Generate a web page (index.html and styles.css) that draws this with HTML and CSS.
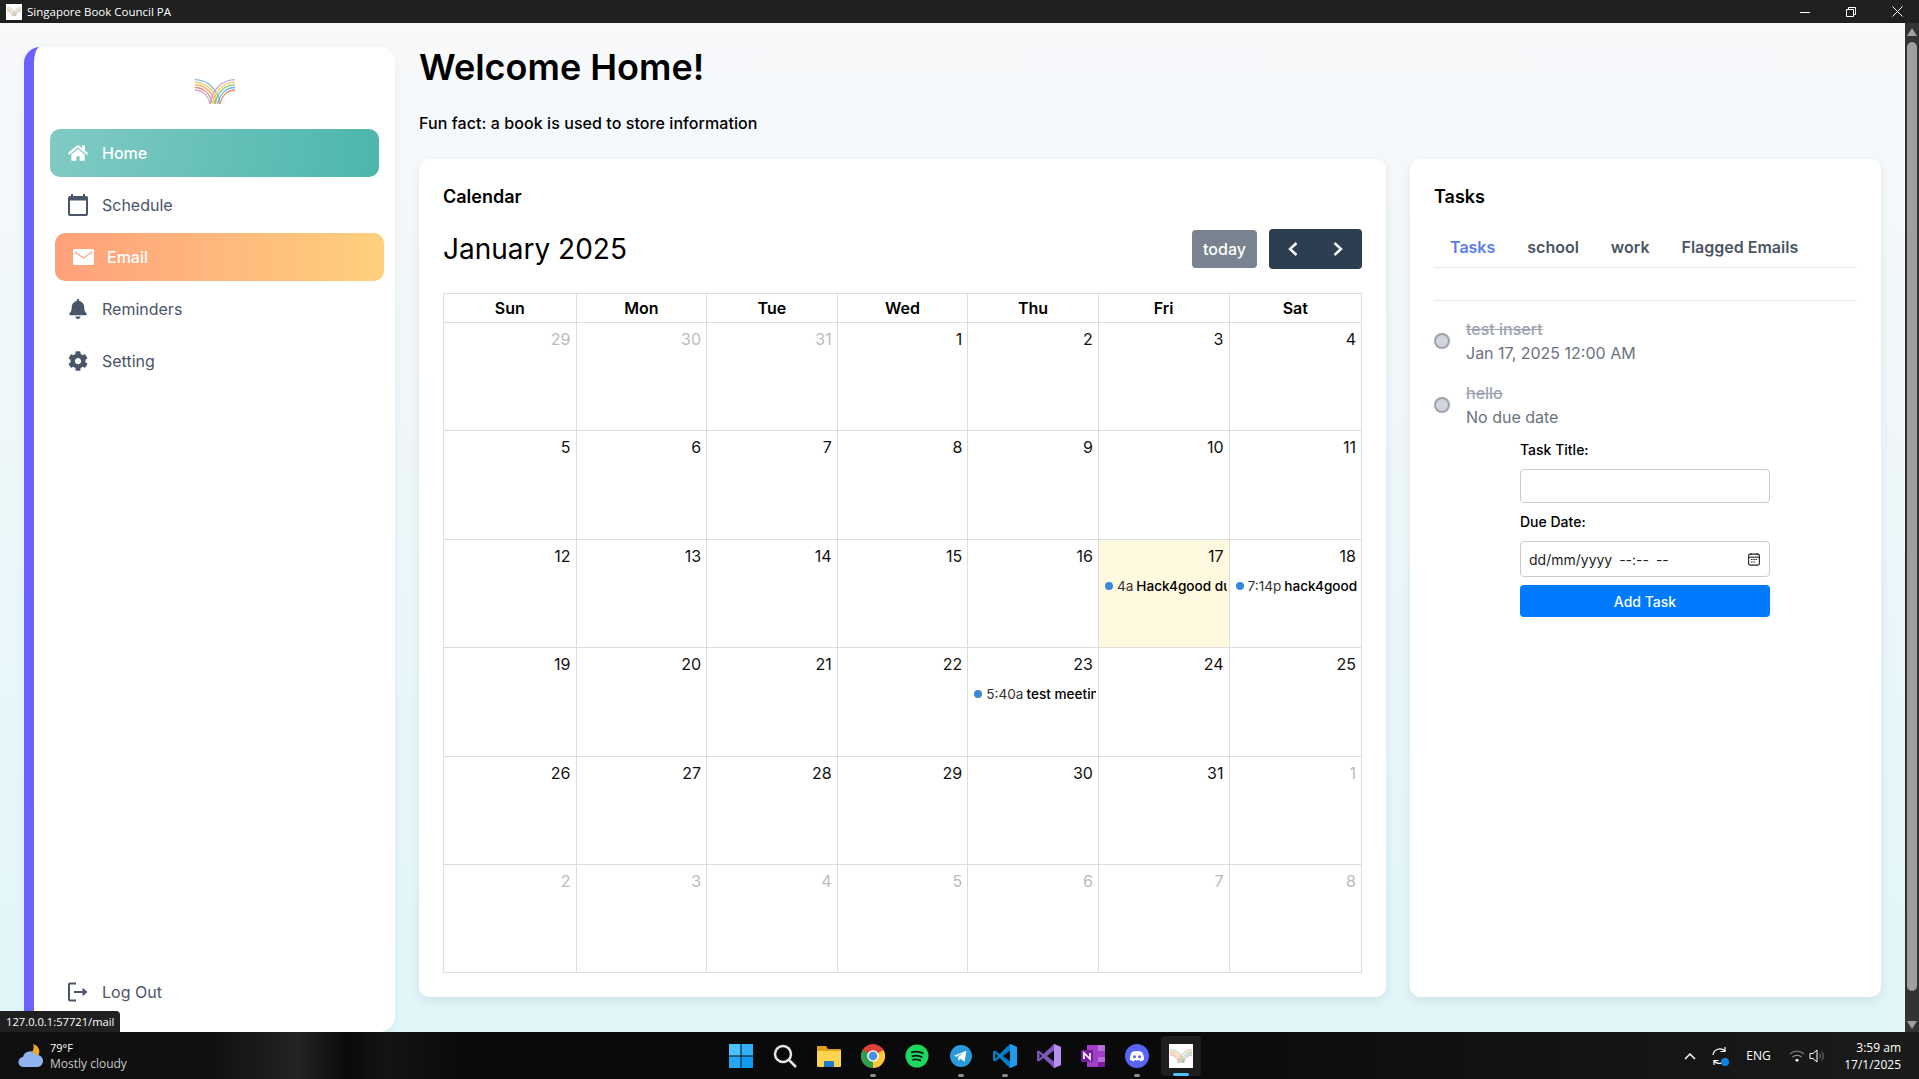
FILE: index.html
```html
<!DOCTYPE html>
<html>
  <head>
    <title>Singapore Book Council PA</title>
    <link rel="stylesheet" href="styles.css">
  </head>
  <body>
    <svg class="defs" width="0" height="0">
      <symbol id="logo" viewBox="0 0 40 25">
        <g fill="none" stroke-width="1.300">
          <path d="M0 .7C12 .7 23 10 25 25" stroke="#7fb5e0"/>
          <path d="M0 3.300C11 3.300 20 11 22.500 25" stroke="#f4c95d"/>
          <path d="M0 5.900C10 5.900 18 13 20 25" stroke="#f6a85f"/>
          <path d="M0 8.500C8 8.500 15 14 17.500 25" stroke="#ef8a7a"/>
          <path d="M0 11C7 11 13 16 15 25" stroke="#c9a6d8"/>
          <path d="M40 .7C28 .7 17 10 15 25" stroke="#c9a6d8"/>
          <path d="M40 3.300C29 3.300 20 11 17.500 25" stroke="#f4c95d"/>
          <path d="M40 5.900C30 5.900 22 13 20 25" stroke="#7ccb84"/>
          <path d="M40 8.500C32 8.500 25 14 22.500 25" stroke="#6fb0e8"/>
          <path d="M40 11C33 11 27 16 25 25" stroke="#f2855a"/>
        </g>
      </symbol>
    </svg>

    <header class="titlebar">
      <div class="titlebar-left">
        <span class="app-icon">
          <svg width="14" height="9"><use href="#logo"/></svg>
        </span>
        <span>Singapore Book Council PA</span>
      </div>
      <div class="window-controls">
        <svg width="10" height="10" viewBox="0 0 10 10"><path d="M0 5.500h10" stroke="#fff"/></svg>
        <svg width="10" height="10" viewBox="0 0 10 10"><path d="M.5 2.500h7v7h-7zM2.500 2.500v-2h7v7h-2" fill="none" stroke="#fff"/></svg>
        <svg width="11" height="11" viewBox="0 0 11 11"><path d="M.5.5l10 10M10.500.5l-10 10" stroke="#fff"/></svg>
      </div>
    </header>

    <div class="viewport">
      <aside class="sidebar">
        <div class="logo">
          <svg width="40" height="25"><use href="#logo"/></svg>
        </div>
        <nav class="nav">
          <a class="nav-item nav-home">
            <svg class="nav-icon" viewBox="0 0 576 512"><path fill="currentColor" d="M280.37 148.26L96 300.11V464a16 16 0 0 0 16 16l112.06-.29a16 16 0 0 0 15.92-16V368a16 16 0 0 1 16-16h64a16 16 0 0 1 16 16v95.64a16 16 0 0 0 16 16.05L464 480a16 16 0 0 0 16-16V300L295.67 148.26a12.19 12.19 0 0 0-15.3 0zM571.6 251.47L488 182.56V44.05a12 12 0 0 0-12-12h-56a12 12 0 0 0-12 12v72.61L318.47 43a48 48 0 0 0-61 0L4.34 251.47a12 12 0 0 0-1.6 16.9l25.5 31A12 12 0 0 0 45.15 301l235.22-193.74a12.19 12.19 0 0 1 15.3 0L530.9 301a12 12 0 0 0 16.9-1.6l25.5-31a12 12 0 0 0-1.7-16.93z"/></svg>
            <span>Home</span>
          </a>
          <a class="nav-item">
            <svg class="nav-icon nav-icon-tall" viewBox="0 0 20 22"><path fill="currentColor" d="M3 0h2v2h10V0h2v2h1a2 2 0 0 1 2 2v16a2 2 0 0 1-2 2H2a2 2 0 0 1-2-2V4a2 2 0 0 1 2-2h1zM2 6.500V20h16V6.500z"/></svg>
            <span>Schedule</span>
          </a>
          <a class="nav-item nav-email">
            <svg class="nav-icon nav-icon-wide" viewBox="0 0 21 16"><rect width="21" height="16" rx="1.500" fill="#fff"/><path d="M2 3l8.500 6L19 3" fill="none" stroke="#ffa585" stroke-width="1.200"/></svg>
            <span>Email</span>
          </a>
          <a class="nav-item">
            <svg class="nav-icon" viewBox="0 0 448 512"><path fill="currentColor" d="M224 512c35.32 0 63.97-28.65 63.97-64H160.03c0 35.35 28.65 64 63.97 64zm215.39-149.71c-19.32-20.76-55.47-51.99-55.47-154.29 0-77.7-54.48-139.9-127.94-155.16V32c0-17.67-14.32-32-31.98-32s-31.98 14.33-31.98 32v20.84C118.56 68.1 64.08 130.3 64.08 208c0 102.3-36.15 133.53-55.47 154.29-6 6.45-8.66 14.16-8.61 21.71.11 16.4 12.98 32 32.1 32h383.8c19.12 0 32-15.6 32.1-32 .05-7.55-2.61-15.27-8.61-21.71z"/></svg>
            <span>Reminders</span>
          </a>
          <a class="nav-item">
            <svg class="nav-icon" viewBox="0 0 512 512"><path fill="currentColor" d="M487.4 315.7l-42.6-24.6c4.3-23.2 4.3-47 0-70.2l42.6-24.6c4.9-2.8 7.1-8.6 5.5-14-11.1-35.6-30-67.8-54.7-94.6-3.8-4.1-10-5.1-14.8-2.3L380.8 110c-17.9-15.4-38.5-27.3-60.8-35.1V25.8c0-5.6-3.9-10.5-9.4-11.7-36.7-8.2-74.3-7.8-109.2 0-5.5 1.2-9.4 6.1-9.4 11.7V75c-22.2 7.9-42.8 19.8-60.8 35.1L88.7 85.5c-4.9-2.8-11-1.9-14.8 2.3-24.7 26.7-43.6 58.9-54.7 94.6-1.7 5.4.6 11.2 5.5 14L67.3 221c-4.3 23.2-4.3 47 0 70.2l-42.6 24.6c-4.9 2.8-7.1 8.6-5.5 14 11.1 35.6 30 67.8 54.7 94.6 3.8 4.1 10 5.1 14.8 2.3l42.6-24.6c17.9 15.4 38.5 27.3 60.8 35.1v49.2c0 5.6 3.9 10.5 9.4 11.7 36.7 8.2 74.3 7.8 109.2 0 5.5-1.2 9.4-6.1 9.4-11.7v-49.2c22.2-7.9 42.8-19.8 60.8-35.1l42.6 24.6c4.9 2.8 11 1.9 14.8-2.3 24.7-26.7 43.6-58.9 54.7-94.6 1.5-5.5-.7-11.3-5.6-14.1zM256 336c-44.1 0-80-35.9-80-80s35.9-80 80-80 80 35.9 80 80-35.9 80-80 80z"/></svg>
            <span>Setting</span>
          </a>
        </nav>
        <a class="nav-item nav-logout">
          <svg class="nav-icon" viewBox="0 0 20 20"><path d="M8 1.500H2a1 1 0 0 0-1 1v15a1 1 0 0 0 1 1h6M6 10h12M14.500 7l3.500 3-3.500 3" fill="none" stroke="currentColor" stroke-width="2"/></svg>
          <span>Log Out</span>
        </a>
      </aside>

      <main class="main">
        <h1 class="welcome">Welcome Home!</h1>
        <p class="fun-fact">Fun fact: a book is used to store information</p>

        <div class="cards">
          <section class="card calendar-card">
            <h2 class="card-title">Calendar</h2>
            <div class="calendar-toolbar">
              <div class="month-title">January 2025</div>
              <div class="toolbar-buttons">
                <button class="today-btn">today</button>
                <div class="arrows">
                  <svg width="12" height="16" viewBox="0 0 12 16"><path d="M9.500 2L3 8l6.500 6" fill="none" stroke="#fff" stroke-width="2.400"/></svg>
                  <svg width="12" height="16" viewBox="0 0 12 16"><path d="M2.500 2L9 8l-6.500 6" fill="none" stroke="#fff" stroke-width="2.400"/></svg>
                </div>
              </div>
            </div>

            <table class="month">
              <thead>
                <tr><th class="edge-col">Sun</th><th>Mon</th><th>Tue</th><th>Wed</th><th>Thu</th><th>Fri</th><th class="edge-col">Sat</th></tr>
              </thead>
              <tbody>
                <tr>
                  <td class="other"><div class="day">29</div></td>
                  <td class="other"><div class="day">30</div></td>
                  <td class="other"><div class="day">31</div></td>
                  <td><div class="day">1</div></td>
                  <td><div class="day">2</div></td>
                  <td><div class="day">3</div></td>
                  <td><div class="day">4</div></td>
                </tr>
                <tr>
                  <td><div class="day">5</div></td>
                  <td><div class="day">6</div></td>
                  <td><div class="day">7</div></td>
                  <td><div class="day">8</div></td>
                  <td><div class="day">9</div></td>
                  <td><div class="day">10</div></td>
                  <td><div class="day">11</div></td>
                </tr>
                <tr>
                  <td><div class="day">12</div></td>
                  <td><div class="day">13</div></td>
                  <td><div class="day">14</div></td>
                  <td><div class="day">15</div></td>
                  <td><div class="day">16</div></td>
                  <td class="today">
                    <div class="day">17</div>
                    <div class="event"><span class="dot"></span><span class="time">4a</span><b>Hack4good du</b></div>
                  </td>
                  <td>
                    <div class="day">18</div>
                    <div class="event"><span class="dot"></span><span class="time">7:14p</span><b>hack4good</b></div>
                  </td>
                </tr>
                <tr>
                  <td><div class="day">19</div></td>
                  <td><div class="day">20</div></td>
                  <td><div class="day">21</div></td>
                  <td><div class="day">22</div></td>
                  <td>
                    <div class="day">23</div>
                    <div class="event"><span class="dot"></span><span class="time">5:40a</span><b>test meeting</b></div>
                  </td>
                  <td><div class="day">24</div></td>
                  <td><div class="day">25</div></td>
                </tr>
                <tr>
                  <td><div class="day">26</div></td>
                  <td><div class="day">27</div></td>
                  <td><div class="day">28</div></td>
                  <td><div class="day">29</div></td>
                  <td><div class="day">30</div></td>
                  <td><div class="day">31</div></td>
                  <td class="other"><div class="day">1</div></td>
                </tr>
                <tr>
                  <td class="other"><div class="day">2</div></td>
                  <td class="other"><div class="day">3</div></td>
                  <td class="other"><div class="day">4</div></td>
                  <td class="other"><div class="day">5</div></td>
                  <td class="other"><div class="day">6</div></td>
                  <td class="other"><div class="day">7</div></td>
                  <td class="other"><div class="day">8</div></td>
                </tr>
              </tbody>
            </table>
          </section>

          <section class="card tasks-card">
            <h2 class="card-title">Tasks</h2>
            <div class="tabs">
              <a class="tab tab-active">Tasks</a>
              <a class="tab">school</a>
              <a class="tab">work</a>
              <a class="tab">Flagged Emails</a>
            </div>
            <div class="tasks-rule"></div>

            <div class="task">
              <span class="task-check"></span>
              <div>
                <div class="task-title">test insert</div>
                <div class="task-due">Jan 17, 2025 12:00 AM</div>
              </div>
            </div>
            <div class="task">
              <span class="task-check"></span>
              <div>
                <div class="task-title">hello</div>
                <div class="task-due">No due date</div>
              </div>
            </div>

            <form class="task-form">
              <label for="taskTitle">Task Title:</label>
              <input id="taskTitle" class="field" type="text">
              <label>Due Date:</label>
              <div class="field date-field">
                <span>dd/mm/yyyy --:-- --</span>
                <svg width="12" height="13" viewBox="0 0 12 13"><rect x=".6" y="1.100" width="10.800" height="11" rx="1.500" fill="none" stroke="#222" stroke-width="1.100"/><path d="M1 4.200h10" stroke="#222" stroke-width="1.100"/><path d="M3 .2v2M9 .2v2M3 6.500h1.500M5.300 6.500h1.500M7.600 6.500h1.500M3 9h1.500M5.300 9h1.500" stroke="#222"/></svg>
              </div>
              <button class="add-btn" type="button">Add Task</button>
            </form>
          </section>
        </div>
      </main>

      <div class="scrollbar">
        <svg width="10" height="8" viewBox="0 0 10 8"><path d="M5 0l5 8H0z" fill="#9f9f9f"/></svg>
        <div class="scroll-thumb"></div>
        <svg width="10" height="8" viewBox="0 0 10 8"><path d="M5 8L0 0h10z" fill="#9f9f9f"/></svg>
      </div>

      <div class="status-tip">127.0.0.1:57721/mail</div>
    </div>

    <footer class="taskbar">
      <div class="weather">
        <svg width="26" height="26" viewBox="0 0 26 26">
          <path d="M15 1a8 8 0 1 1-9 11A8 8 0 0 0 15 1z" fill="#f5a623"/>
          <path d="M6 24a5 5 0 0 1-1-10 7 7 0 0 1 13-2 6 6 0 0 1 2 12z" fill="#8fb4ee"/>
        </svg>
        <div>
          <div class="weather-temp">79°F</div>
          <div class="weather-text">Mostly cloudy</div>
        </div>
      </div>

      <div class="task-icons">
        <span class="tb-icon">
          <svg width="24" height="24" viewBox="0 0 24 24"><path fill="#4cc2ff" d="M0 0h11.500v11.500H0z"/><path fill="#2fb0f8" d="M12.500 0H24v11.500H12.500z"/><path fill="#23a6f5" d="M0 12.500h11.500V24H0z"/><path fill="#0f9bf0" d="M12.500 12.500H24V24H12.500z"/></svg>
        </span>
        <span class="tb-icon">
          <svg width="24" height="24" viewBox="0 0 24 24"><circle cx="10" cy="10" r="8" fill="none" stroke="#e6e6e6" stroke-width="2.500"/><path d="M16 16l7 7" stroke="#e6e6e6" stroke-width="2.500"/></svg>
        </span>
        <span class="tb-icon">
          <svg width="24" height="24" viewBox="0 0 24 24"><path d="M0 3a1 1 0 0 1 1-1h8l2 3h12a1 1 0 0 1 1 1v3H0z" fill="#e0a21b"/><path d="M0 7h24v15a1 1 0 0 1-1 1H1a1 1 0 0 1-1-1z" fill="#fdd44f"/><path d="M7 18a1 1 0 0 1 1-1h8a1 1 0 0 1 1 1v5H7z" fill="#1f78c8"/></svg>
        </span>
        <span class="tb-icon tb-open">
          <svg width="24" height="24" viewBox="0 0 24 24"><circle cx="12" cy="12" r="12" fill="#db4437"/><path d="M12 12L1.600 6A12 12 0 0 0 12 24z" fill="#2e9e4f"/><path d="M12 12v12A12 12 0 0 0 22.400 6z" fill="#fcc934"/><circle cx="12" cy="12" r="5.800" fill="#fff"/><circle cx="12" cy="12" r="4.400" fill="#4a90e2"/></svg>
        </span>
        <span class="tb-icon">
          <svg width="24" height="24" viewBox="0 0 24 24"><circle cx="12" cy="12" r="11.500" fill="#1ed760"/><path d="M6 8.500c4-1.200 9-1 12.500 1M6.800 12.300c3.400-1 7.500-.7 10.500 1M7.500 15.800c2.800-.8 6-.5 8.500 1" fill="none" stroke="#111" stroke-width="1.800"/></svg>
        </span>
        <span class="tb-icon tb-open">
          <svg width="24" height="24" viewBox="0 0 24 24"><circle cx="12" cy="12" r="11" fill="#2a9bd8"/><path d="M5 11.800l12.500-5-2 11-4-3-2 2-.5-3.500 5.500-4.800-7 4.300z" fill="#fff"/></svg>
        </span>
        <span class="tb-icon tb-open">
          <svg width="24" height="24" viewBox="0 0 24 24"><path d="M17 0l7 3v18l-7 3L6.500 14 2 17.500 0 16.500v-9l2-1L6.500 10z" fill="#0a7cc4"/><path d="M17 0l7 3v18l-7 3z" fill="#1f9cf0"/><path d="M17 6.500L10 12l7 5.500z" fill="#0b0b0b"/><path d="M2.500 9.500v5L5 12z" fill="#0b0b0b"/></svg>
        </span>
        <span class="tb-icon">
          <svg width="24" height="24" viewBox="0 0 24 24"><path d="M17 0l7 3v18l-7 3L6.500 14 2 17.500 0 16.500v-9l2-1L6.500 10z" fill="#7a57b8"/><path d="M17 0l7 3v18l-7 3z" fill="#b68ff0"/><path d="M17 6.500L10 12l7 5.500z" fill="#0b0b0b"/><path d="M2.500 9.500v5L5 12z" fill="#0b0b0b"/></svg>
        </span>
        <span class="tb-icon">
          <svg width="24" height="24" viewBox="0 0 24 24"><path d="M6 1h17a1 1 0 0 1 1 1v20a1 1 0 0 1-1 1H6z" fill="#a33ec7"/><path d="M17 1h6a1 1 0 0 1 1 1v5h-7zM17 13h7v5h-7z" fill="#bb6ddb"/><path d="M17 18h7v4a1 1 0 0 1-1 1h-6z" fill="#7a1e9e"/><rect y="6" width="12" height="12" rx="1" fill="#74209c"/><path d="M3 15V9l6 6V9" fill="none" stroke="#fff" stroke-width="1.600"/></svg>
        </span>
        <span class="tb-icon tb-open">
          <svg width="24" height="24" viewBox="0 0 24 24"><circle cx="12" cy="12" r="12" fill="#5865f2"/><path d="M7 8c3-1.400 7-1.400 10 0 1.500 2.500 2.200 5 2 7.700-1.200.9-2.500 1.500-3.800 1.800l-.9-1.400c-1.500.4-3.100.4-4.600 0l-.9 1.400c-1.300-.3-2.600-.9-3.800-1.800-.2-2.700.5-5.200 2-7.700z" fill="#fff"/><circle cx="9.500" cy="12.700" r="1.500" fill="#5865f2"/><circle cx="14.500" cy="12.700" r="1.500" fill="#5865f2"/></svg>
        </span>
        <span class="tb-icon tb-active">
          <span class="tb-app">
            <svg width="22" height="14"><use href="#logo"/></svg>
          </span>
        </span>
      </div>

      <div class="tray">
        <svg width="12" height="8" viewBox="0 0 12 8"><path d="M1 7l5-5 5 5" fill="none" stroke="#fff" stroke-width="1.500"/></svg>
        <span class="sync">
          <svg width="17" height="18" viewBox="0 0 17 18"><path d="M1 8a7 7 0 0 1 12-4M13 0v4.500H8.500M14 11a7 7 0 0 1-12 3M2 18v-4.500h4.500" fill="none" stroke="#fff" stroke-width="1.200"/></svg>
          <span class="sync-dot"></span>
        </span>
        <span class="lang">ENG</span>
        <span class="tray-net">
          <svg width="16" height="14" viewBox="0 0 16 14"><path d="M1 5a10 10 0 0 1 14 0" fill="none" stroke="#777" stroke-width="1.100"/><path d="M3.500 8a6.500 6.500 0 0 1 9 0" fill="none" stroke="#999" stroke-width="1.100"/><path d="M6 11a3 3 0 0 1 4 0l-2 2z" fill="#fff"/></svg>
          <svg width="16" height="14" viewBox="0 0 16 14"><path d="M1 4.500h3L8 1v12L4 9.500H1z" fill="none" stroke="#fff"/><path d="M10.500 4.500a3.500 3.500 0 0 1 0 5M12.500 2.500a6.500 6.500 0 0 1 0 9" fill="none" stroke="#777"/></svg>
        </span>
        <div class="clock">
          <div>3:59 am</div>
          <div>17/1/2025</div>
        </div>
      </div>
    </footer>
  </body>
</html>
```

FILE: styles.css
```css
* {
  box-sizing: border-box;
}

html,
body {
  height: 100%;
}

body {
  margin: 0;
  display: flex;
  flex-direction: column;
  overflow: hidden;
  font-family: Inter, "Liberation Sans", sans-serif;
  color: #000;
}

.defs {
  position: absolute;
}

/* window chrome */
.titlebar {
  height: 23px;
  flex: none;
  display: flex;
  align-items: center;
  justify-content: space-between;
  padding-left: 6px;
  background-color: #202020;
  color: #fff;
  font-family: "Open Sans", sans-serif;
  font-size: 11.500px;
}

.titlebar-left {
  display: flex;
  align-items: center;
  gap: 5px;
}

.app-icon {
  width: 16px;
  height: 16px;
  display: flex;
  align-items: center;
  justify-content: center;
  background-color: #fff;
}

.window-controls {
  display: flex;
  align-items: center;
  gap: 36px;
  padding-right: 16px;
}

.viewport {
  position: relative;
  flex: 1;
  min-height: 0;
  display: flex;
  background: linear-gradient(180deg, #f8f9fb 0%, #e0f6f9 100%);
}

/* sidebar */
.sidebar {
  width: 371px;
  flex: none;
  margin: 24px 0 0 24px;
  display: flex;
  flex-direction: column;
  padding: 0 16px 0;
  background-color: #fff;
  border-left: 10px solid #6c63ff;
  border-radius: 16px;
  box-shadow: 0 4px 12px rgba(0, 0, 0, 0.05);
}

.logo {
  height: 82px;
  padding-top: 32px;
  display: flex;
  justify-content: center;
}

.logo svg {
  display: block;
}

.nav {
  display: flex;
  flex-direction: column;
  gap: 4px;
}

.nav-item {
  height: 48px;
  display: flex;
  align-items: center;
  gap: 14px;
  padding-left: 18px;
  border-radius: 10px;
  color: #4a5568;
  font-size: 16px;
  cursor: pointer;
}

.nav-icon {
  width: 20px;
  height: 20px;
  flex: none;
}

.nav-icon-tall {
  height: 22px;
}

.nav-icon-wide {
  width: 21px;
  height: 16px;
  margin-right: -1px;
}

.nav-home {
  color: #fff;
  font-weight: 500;
  background: linear-gradient(100deg, #80cbc4 0%, #4db6ac 100%);
}

.nav-email {
  color: #fff;
  font-weight: 500;
  transform: translateX(5px);
  background: linear-gradient(90deg, #ffa07a 0%, #ffd07e 100%);
}

.nav-logout {
  margin-top: auto;
  margin-bottom: 16px;
}

/* main */
.main {
  flex: 1;
  min-width: 0;
  padding: 0 24px;
}

.welcome {
  margin: 22px 0 0;
  font-size: 36px;
  line-height: 44px;
  font-weight: 600;
}

.fun-fact {
  margin: 22px 0 0;
  font-size: 16px;
  line-height: 24px;
  font-weight: 500;
  letter-spacing: 0.07px;
}

.cards {
  display: flex;
  gap: 24px;
  margin-top: 24px;
}

.card {
  height: 838px;
  padding: 24px;
  background-color: #fff;
  border-radius: 10px;
  box-shadow: 0 4px 12px rgba(0, 0, 0, 0.08);
}

.calendar-card {
  width: 967px;
}

.tasks-card {
  flex: 1;
}

.card-title {
  margin: 0;
  font-size: 18px;
  line-height: 28px;
  font-weight: 600;
}

.calendar-toolbar {
  display: flex;
  align-items: center;
  justify-content: space-between;
  margin-top: 18px;
  height: 40px;
}

.month-title {
  font-size: 28px;
}

.toolbar-buttons {
  display: flex;
  align-items: center;
  gap: 12px;
}

.today-btn {
  width: 65px;
  height: 38px;
  border: none;
  border-radius: 4px;
  background-color: #78838f;
  color: #fff;
  font-family: inherit;
  font-size: 16px;
  font-weight: 500;
}

.arrows {
  width: 93px;
  height: 40px;
  display: flex;
  align-items: center;
  justify-content: center;
  gap: 33px;
  border-radius: 4px;
  background-color: #2c3e50;
}

.month {
  width: 100%;
  margin-top: 24px;
  table-layout: fixed;
  border-collapse: collapse;
}

.month th,
.month td {
  border: 1px solid #ddd;
  padding: 0;
}

.month th {
  height: 29px;
  font-size: 16px;
  font-weight: 600;
}

.month .edge-col {
  width: 132.500px;
}

.month td {
  height: 108.400px;
  vertical-align: top;
  overflow: hidden;
}

.day {
  padding: 4px 5px 0;
  text-align: right;
  font-size: 16px;
  line-height: 24px;
  color: #111;
}

.other .day {
  color: #bbb;
}

.today {
  background-color: #fff9e0;
}

.event {
  margin: 8px 2px 0 1px;
  padding-left: 5px;
  display: flex;
  align-items: center;
  white-space: nowrap;
  overflow: hidden;
  font-size: 13.600px;
  line-height: 20px;
}

.event b {
  font-weight: 500;
  margin-left: 3px;
}

.time {
  color: #333;
}

.dot {
  width: 8px;
  height: 8px;
  flex: none;
  margin-right: 4px;
  border-radius: 50%;
  background-color: #3788d8;
}

/* tasks */
.tabs {
  display: flex;
  gap: 32px;
  margin-top: 14px;
  padding: 2px 16px 0;
  height: 43px;
  align-items: center;
  border-bottom: 1px solid #e5e7eb;
  font-size: 16px;
  font-weight: 600;
  color: #4b5563;
}

.tab-active {
  color: #5b7cf0;
}

.tasks-rule {
  margin-top: 32px;
  border-top: 1px solid #e5e7eb;
}

.task {
  display: flex;
  align-items: center;
  gap: 16px;
  height: 64px;
  margin-top: 8px;
  margin-bottom: -8px;
}

.task-check {
  width: 16px;
  height: 16px;
  flex: none;
  border-radius: 50%;
  background-color: #d1d5db;
  border: 2px solid #9ca3af;
}

.task-title {
  font-size: 16px;
  line-height: 24px;
  font-weight: 500;
  color: #9ca3af;
  text-decoration: line-through;
}

.task-due {
  font-size: 16px;
  line-height: 24px;
  color: #6b7280;
}

.task-form {
  width: 250px;
  margin: 11px 0 0 86px;
  display: flex;
  flex-direction: column;
}

.task-form label {
  font-size: 14px;
  line-height: 20px;
  font-weight: 500;
  margin-bottom: 9px;
}

.field {
  width: 100%;
  height: 34px;
  margin-bottom: 9px;
  border: 1px solid #ccc;
  border-radius: 4px;
  background-color: #fff;
}

.date-field {
  height: 36px;
  display: flex;
  align-items: center;
  justify-content: space-between;
  padding: 0 9px 0 8px;
  margin-bottom: 8px;
  font-size: 14px;
  word-spacing: 3px;
  color: #222;
}

.add-btn {
  height: 32px;
  border: none;
  border-radius: 4px;
  background-color: #007bff;
  color: #fff;
  font-family: inherit;
  font-size: 14px;
  font-weight: 500;
}

/* fake window scrollbar */
.scrollbar {
  width: 14px;
  flex: none;
  display: flex;
  flex-direction: column;
  align-items: center;
  gap: 6px;
  padding: 5px 0 3px;
  background-color: #333;
}

.scroll-thumb {
  flex: 1;
  width: 10px;
  margin-bottom: 24px;
  border-radius: 5px;
  background-color: #9f9f9f;
}

.status-tip {
  position: absolute;
  left: 0;
  bottom: 0;
  height: 21px;
  padding: 0 6px;
  display: flex;
  align-items: center;
  background-color: #202020;
  border-top-right-radius: 4px;
  color: #fff;
  font-family: "Open Sans", sans-serif;
  font-size: 11.200px;
}

/* taskbar */
.taskbar {
  position: relative;
  height: 47px;
  flex: none;
  display: flex;
  align-items: center;
  justify-content: space-between;
  background: linear-gradient(90deg, #0f0f0f 0%, #101010 11%, #232323 15.500%, #1a1a1a 16.500%, #0a0a0a 18.200%, #141414 20%, #0a0a0a 24%, #0a0a0a 60%, #1b1b1b 100%);
  color: #fff;
  font-family: "Open Sans", sans-serif;
  font-size: 12px;
}

.weather {
  display: flex;
  align-items: center;
  gap: 6px;
  padding-left: 18px;
  line-height: 16px;
}

.weather-temp {
  font-size: 11px;
}

.weather-text {
  color: #c8c8c8;
}

.task-icons {
  position: absolute;
  left: 721px;
  top: 0;
  height: 47px;
  display: flex;
  align-items: center;
  gap: 4px;
}

.tb-icon {
  position: relative;
  width: 40px;
  height: 40px;
  display: flex;
  align-items: center;
  justify-content: center;
}

.tb-open::after {
  content: "";
  position: absolute;
  left: 17px;
  bottom: -1px;
  width: 6px;
  height: 3px;
  border-radius: 2px;
  background-color: #8a8a8a;
}

.tb-active {
  border-radius: 4px;
  background-color: #1e1e1e;
}

.tb-active::after {
  content: "";
  position: absolute;
  left: 12px;
  bottom: 0;
  width: 16px;
  height: 3px;
  border-radius: 2px;
  background-color: #4cc2ff;
}

.tb-app {
  width: 24px;
  height: 24px;
  display: flex;
  align-items: center;
  justify-content: center;
  background-color: #fff;
}

.tray {
  display: flex;
  align-items: center;
  padding-right: 18px;
}

.sync {
  position: relative;
  display: flex;
  margin-left: 16.500px;
}

.sync-dot {
  position: absolute;
  right: 0;
  bottom: -1px;
  width: 8px;
  height: 8px;
  border-radius: 50%;
  background-color: #0a84e0;
}

.lang {
  margin-left: 17px;
  font-size: 12px;
}

.tray-net {
  display: flex;
  gap: 4px;
  margin-left: 18px;
}

.clock {
  margin-left: 19.400px;
  text-align: right;
  font-size: 12px;
  line-height: 17px;
}
```
